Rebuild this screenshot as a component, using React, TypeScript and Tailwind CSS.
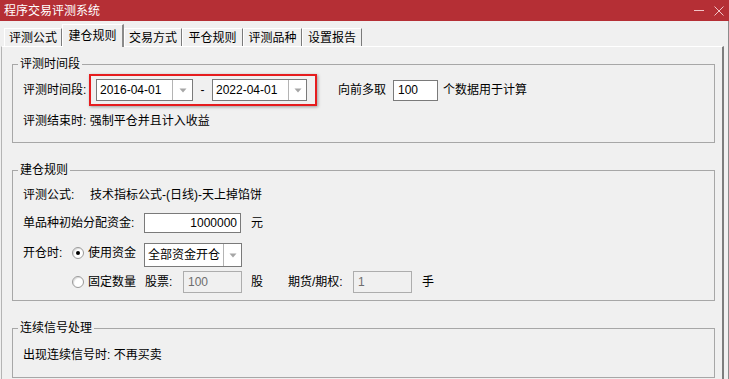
import React from "react";

const FONT = "font-['Liberation_Sans','Noto_Sans_CJK_SC',sans-serif]";

function Arrow() {
  return (
    <svg width="8" height="5" viewBox="0 0 8 5">
      <path d="M0.5 0.5 L7.5 0.5 L4 4.5 Z" fill="#a6a6a6" />
    </svg>
  );
}

function Combo({ value, className, btn }: { value: string; className: string; btn: string }) {
  return (
    <div className={`flex border border-[#7a7a7a] bg-white ${className}`}>
      <div className="flex-1 flex items-center pl-[3px] whitespace-nowrap overflow-hidden">{value}</div>
      <div className={`flex items-center justify-center border-l border-[#b4b4b4] ${btn}`}>
        <Arrow />
      </div>
    </div>
  );
}

function Radio({ checked }: { checked?: boolean }) {
  return (
    <div className="w-[12px] h-[12px] rounded-full border border-[#9a9a9a] bg-white flex items-center justify-center shadow-[inset_1px_1px_1px_rgba(0,0,0,0.15)]">
      {checked && <div className="w-[4px] h-[4px] rounded-full bg-black" />}
    </div>
  );
}

const tabs = [
  { label: "评测公式", w: "w-[58px]" },
  { label: "建仓规则", w: "w-[62px]", active: true },
  { label: "交易方式", w: "w-[58px]" },
  { label: "平仓规则", w: "w-[61px]" },
  { label: "评测品种", w: "w-[59px]" },
  { label: "设置报告", w: "w-[60px]" },
];

export default function App() {
  return (
    <div className={`w-[729px] h-[379px] overflow-hidden bg-[#f0f0f0] text-[12px] leading-[16px] text-black ${FONT}`}>
      {/* TITLE BAR */}
      <div className="h-[21px] bg-[#b52f35] flex items-center justify-between pl-[4px] pr-[5px]">
        <span className="text-white">程序交易评测系统</span>
        <div className="flex items-center gap-[10px]">
          <svg width="10" height="10" viewBox="0 0 10 10">
            <line x1="0" y1="4.5" x2="10" y2="4.5" stroke="#f2c4c6" strokeWidth="1" />
          </svg>
          <svg width="10" height="10" viewBox="0 0 10 10">
            <path d="M0.5 0.5 L9.5 9.5 M9.5 0.5 L0.5 9.5" stroke="#f2c4c6" strokeWidth="1" />
          </svg>
        </div>
      </div>

      <div className="h-[358px] border-r border-[#8c8c8c]">
        {/* TABS */}
        <div className="h-[25px] flex items-end pl-[4px]">
          {tabs.map((t) =>
            t.active ? (
              <div
                key={t.label}
                className={`${t.w} h-[23px] -mb-[1px] relative z-10 bg-[#f0f0f0] border-t border-l border-white border-r-2 border-r-[#8a8a8a] flex items-start justify-center pt-[3px]`}
              >
                {t.label}
              </div>
            ) : (
              <div
                key={t.label}
                className={`${t.w} h-[18px] border-t border-l border-white border-r border-r-[#7a7a7a] flex items-center justify-center`}
              >
                {t.label}
              </div>
            )
          )}
        </div>

        {/* PANEL */}
        <div className="ml-[1px] w-[723px] h-[333px] border-t border-white border-l border-l-[#b4b4b4] border-r-2 border-r-[#7d7d7d] pl-[10px] pt-[9px]">
          {/* 评测时间段 */}
          <fieldset className="w-[703px] border border-[#a7a7a7]">
            <legend className="ml-[5px] px-[2px] leading-[16px]">评测时间段</legend>
            <div className="pl-[10px] pb-[8px]">
              <div className="h-[36px] flex items-center">
                <span className="w-[66px]">评测时间段:</span>
                <div className="h-[32px] flex items-center border-2 border-[#e61c1e] pl-[5px] pr-[8px] shadow-[1px_1px_3px_rgba(0,0,0,0.35)]">
                  <Combo value="2016-04-01" className="w-[97px] h-[22px]" btn="w-[20px]" />
                  <span className="w-[19px] text-center">-</span>
                  <Combo value="2022-04-01" className="w-[95px] h-[22px]" btn="w-[18px]" />
                </div>
                <span className="ml-[21px]">向前多取</span>
                <div className="ml-[7px] w-[45px] h-[21px] border border-[#7a7a7a] bg-white flex items-center pl-[4px]">100</div>
                <span className="ml-[5px]">个数据用于计算</span>
              </div>
              <div className="h-[26px] flex items-center">评测结束时: 强制平仓并且计入收益</div>
            </div>
          </fieldset>

          {/* 建仓规则 */}
          <fieldset className="mt-[19px] w-[703px] border border-[#a7a7a7]">
            <legend className="ml-[5px] px-[2px] leading-[16px]">建仓规则</legend>
            <div className="pl-[10px] pb-[7px]">
              <div className="h-[33px] flex items-center">
                <span className="w-[67px]">评测公式:</span>
                <span>技术指标公式-(日线)-天上掉馅饼</span>
              </div>
              <div className="h-[28px] flex items-start pt-[2px]">
                <span className="w-[121px] h-[20px] flex items-center">单品种初始分配资金:</span>
                <div className="w-[97px] h-[20px] border border-[#7a7a7a] bg-white flex items-center justify-end pr-[3px]">1000000</div>
                <span className="ml-[10px] h-[20px] flex items-center">元</span>
              </div>
              <div className="h-[32px] flex items-center">
                <div className="w-[49px] -mt-[4px]">开仓时:</div>
                <div className="w-[72px] flex items-center gap-[4px] -mt-[4px]">
                  <Radio checked />
                  <span>使用资金</span>
                </div>
                <Combo value="全部资金开仓" className="w-[98px] h-[24px]" btn="w-[18px]" />
              </div>
              <div className="h-[22px] flex items-center">
                <div className="w-[49px]" />
                <div className="w-[73px] flex items-center gap-[4px]">
                  <Radio />
                  <span>固定数量</span>
                </div>
                <span className="w-[38px]">股票:</span>
                <div className="w-[59px] h-[22px] border border-[#adadad] bg-[#f0f0f0] text-[#6d6d6d] flex items-center pl-[4px]">100</div>
                <span className="ml-[9px]">股</span>
                <span className="ml-[25px] w-[65px]">期货/期权:</span>
                <div className="w-[59px] h-[22px] border border-[#adadad] bg-[#f0f0f0] text-[#6d6d6d] flex items-center pl-[4px]">1</div>
                <span className="ml-[10px]">手</span>
              </div>
            </div>
          </fieldset>

          {/* 连续信号处理 */}
          <fieldset className="mt-[19px] w-[703px] border border-[#a7a7a7]">
            <legend className="ml-[5px] px-[2px] leading-[16px]">连续信号处理</legend>
            <div className="pl-[10px] pt-[7px] pb-[10px]">
              <div className="h-[24px] flex items-center">出现连续信号时: 不再买卖</div>
            </div>
          </fieldset>
        </div>
      </div>
    </div>
  );
}
